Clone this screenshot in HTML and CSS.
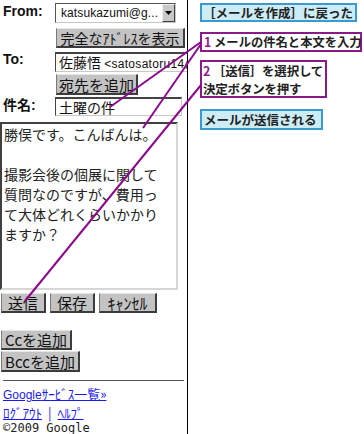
FILE: index.html
```html
<!DOCTYPE html>
<html lang="ja">
<head>
<meta charset="utf-8">
<title>メール作成</title>
<link rel="stylesheet" href="styles.css">
</head>
<body>
<div class="stage">
  <div class="phone">
    <div class="row r-from">
      <span class="lbl">From:</span>
      <div class="select">
        <span class="sel-text">katsukazumi@g...</span>
        <span class="sel-btn"><svg width="7" height="4" viewBox="0 0 7 4"><path d="M0 0H7L3.5 4Z" fill="#000"/></svg></span>
      </div>
    </div>
    <div class="row r-btn1"><span class="btn w-full">完全なｱﾄﾞﾚｽを表示</span></div>
    <div class="row r-to">
      <span class="lbl">To:</span>
      <div class="field to-field">佐藤悟 <span class="addr">&lt;satosatoru14@</span></div>
    </div>
    <div class="row r-btn2"><span class="btn w-add">宛先を追加</span></div>
    <div class="row r-subj">
      <span class="lbl">件名:</span>
      <div class="field subj-field">土曜の件</div>
    </div>
    <div class="textarea">勝俣です。こんばんは。<br><br>撮影会後の個展に関して<br>質問なのですが、費用っ<br>て大体どれくらいかかり<br>ますか？</div>
    <div class="actions">
      <span class="btn w-send">送信</span>
      <span class="btn w-save">保存</span>
      <span class="btn w-cancel">ｷｬﾝｾﾙ</span>
    </div>
    <span class="btn cc">Ccを追加</span>
    <span class="btn bcc">Bccを追加</span>
    <div class="rule"></div>
    <div class="links l1"><a class="lnk"><span class="lat">Google</span>ｻｰﾋﾞｽ一覧»</a></div>
    <div class="links l2"><a class="lnk">ﾛｸﾞｱｳﾄ</a><span class="sep">|</span><a class="lnk">ﾍﾙﾌﾟ</a></div>
    <div class="copy">©2009 Google</div>
  </div>
  <div class="notes">
    <div class="note blue n1">［メールを作成］に戻った</div>
    <div class="note purple n2"><span class="num">1</span> メールの件名と本文を入力</div>
    <div class="note purple n3"><span class="num">2</span> ［送信］を選択して<br>決定ボタンを押す</div>
    <div class="note blue n4">メールが送信される</div>
  </div>
  <svg class="leaders" width="364" height="434" viewBox="0 0 364 434">
    <line x1="201" y1="42" x2="110" y2="107"/>
    <line x1="201" y1="44" x2="143" y2="128"/>
    <line x1="201" y1="85" x2="25" y2="301"/>
  </svg>
</div>
</body>
</html>
```
FILE: styles.css
```css
body {
  margin: 0;
  background: #fff;
  font-family: "Liberation Sans", "Noto Sans CJK JP", sans-serif;
  color: #111;
}

.stage {
  position: relative;
  width: 364px;
  height: 434px;
  display: flex;
  overflow: hidden;
}

.phone {
  flex: none;
  width: 187px;
  height: 434px;
  border-right: 1px solid #000;
  overflow: hidden;
  display: flex;
  flex-direction: column;
  align-items: flex-start;
}

.row {
  display: flex;
  align-items: flex-start;
  height: 20px;
  flex: none;
}

.lbl {
  flex: none;
  width: 52px;
  padding-left: 3px;
  font-weight: bold;
  font-size: 14px;
  line-height: 16px;
}

.r-from { margin-top: 3px; }
.r-btn1 { margin-top: 5px; margin-left: 56px; }
.r-to { margin-top: 4px; }
.r-to .lbl { margin-top: -1px; }
.r-btn2 { margin-top: 2px; margin-left: 56px; height: 21px; }
.r-subj { margin-top: 2px; height: 19px; }

.select {
  box-sizing: border-box;
  width: 121px;
  height: 20px;
  border: 1px solid;
  border-color: #555 #c8c8c8 #c8c8c8 #555;
  display: flex;
  align-items: center;
  background: #fff;
}

.sel-text {
  flex: 1;
  padding-left: 5px;
  font-size: 12px;
  letter-spacing: 0.1px;
  white-space: nowrap;
}

.sel-btn {
  box-sizing: border-box;
  width: 13px;
  height: 18px;
  background: #c8c8c8;
  border: 1px solid;
  border-color: #eee #404040 #404040 #eee;
  display: flex;
  align-items: center;
  justify-content: center;
}

.field {
  box-sizing: border-box;
  height: 20px;
  border: 1px solid;
  border-color: #444 #c8c8c8 #c8c8c8 #444;
  border-top-width: 2px;
  font-family: "Noto Sans CJK JP", sans-serif;
  font-size: 14px;
  line-height: 16px;
  padding-left: 3px;
  white-space: nowrap;
  overflow: hidden;
}

.to-field { width: 145px; }
.subj-field { width: 127px; height: 19px; }

.addr {
  font-family: "Liberation Sans", sans-serif;
  font-size: 12px;
  letter-spacing: 0.3px;
}

.btn {
  flex: none;
  box-sizing: border-box;
  display: flex;
  align-items: center;
  justify-content: center;
  height: 20px;
  background: #c3c3c3;
  border: 1px solid;
  border-color: #e6e6e6 #3c3c3c #3c3c3c #7a7a7a;
  border-right-width: 2px;
  border-bottom-width: 2px;
  font-family: "Noto Sans CJK JP", sans-serif;
  font-size: 15px;
  line-height: 1;
  color: #111;
  white-space: nowrap;
}

.w-full { width: 129px; font-size: 14px; }
.w-add { width: 82px; height: 21px; }

.textarea {
  flex: none;
  box-sizing: border-box;
  margin-top: 6px;
  width: 178px;
  height: 168px;
  border: 2px solid;
  border-color: #404040 #d6d6d6 #d6d6d6 #404040;
  padding: 0 2px;
  font-family: "Noto Sans CJK JP", sans-serif;
  font-size: 14px;
  line-height: 20px;
  color: #222;
}

.actions {
  display: flex;
  gap: 4px;
  margin-top: 3px;
  margin-left: 1px;
}

.w-send, .w-save { width: 45px; }
.w-cancel { width: 58px; font-size: 16px; }

.cc { margin-top: 17px; margin-left: 1px; width: 71px; }
.bcc { margin-top: 1px; margin-left: 1px; width: 79px; height: 21px; }

.rule {
  margin-top: 8px;
  margin-left: 3px;
  width: 181px;
  height: 0;
  border-top: 1px solid #555;
}

.links {
  font-family: "Noto Sans CJK JP", sans-serif;
  font-size: 13px;
  line-height: 16px;
  padding-left: 3px;
  white-space: nowrap;
}

.l1 { margin-top: 5px; }
.l2 { margin-top: 2px; }

.lnk {
  color: #1a1aee;
  text-decoration: underline;
}

.lat {
  font-family: "Liberation Sans", sans-serif;
  font-size: 12px;
}

.sep {
  color: #1a1aee;
  margin: 0 6px;
}

.copy {
  padding-left: 3px;
  font-family: "DejaVu Sans Mono", monospace;
  font-size: 12px;
  line-height: 14px;
  color: #222;
}

.notes {
  flex: none;
  display: flex;
  flex-direction: column;
  align-items: flex-start;
  margin-left: 12px;
}

.note {
  box-sizing: border-box;
  border: 2px solid;
  font-family: "Noto Sans CJK JP", sans-serif;
  font-weight: bold;
  font-size: 12.5px;
  line-height: 17px;
  color: #222;
  padding: 0 2px;
  white-space: nowrap;
}

.blue {
  background: #ccecf6;
  border-color: #3a9ad0;
}

.purple {
  background: #fff;
  border-color: #8a1a8a;
}

.num {
  color: #8e1e8e;
}

.n1 { margin-top: 3px; width: 157px; height: 19px; line-height: 15px; padding: 0 1px; }
.n2 { margin-top: 10px; width: 162px; height: 20px; line-height: 16px; font-size: 12.3px; }
.n3 { margin-top: 8px; width: 127px; height: 38px; line-height: 18px; padding: 0 0 0 1px; letter-spacing: -0.2px; }
.n4 { margin-top: 11px; width: 123px; height: 21px; }

.leaders {
  position: absolute;
  left: 0;
  top: 0;
  pointer-events: none;
}

.leaders line {
  stroke: #8b0a8b;
  stroke-width: 2;
}
```
